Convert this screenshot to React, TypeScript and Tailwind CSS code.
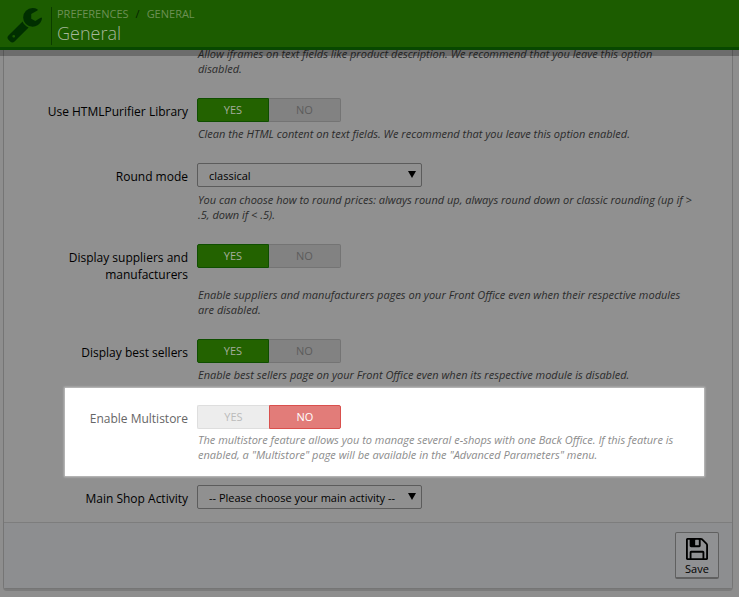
import { ReactNode } from "react";

function WrenchIcon() {
  return (
    <svg viewBox="64 128 1664 1664" className="size-[35px] fill-[#002f00]" aria-hidden="true">
      <path d="M448 1472q0-26-19-45t-45-19-45 19-19 45 19 45 45 19 45-19 19-45zm644-420l-682 682q-37 37-90 37-52 0-91-37l-106-108q-38-36-38-90 0-53 38-91l681-681q39 98 114.5 173.5t173.5 114.5zm634-435q0 39-23 106-47 134-164.5 217.5t-258.5 83.5q-185 0-316.5-131.5t-131.5-316.5 131.5-316.5 316.5-131.5q58 0 121.5 16.5t107.5 46.5q16 11 16 28t-16 28l-293 169v224l193 107q5-3 79-48.5t135.5-81 70.5-35.5q15 0 23.5 10t8.5 25z" />
    </svg>
  );
}

function SaveIcon() {
  return (
    <svg viewBox="128 128 1536 1536" className="size-[22px]" aria-hidden="true">
      <path d="M512 1536h768v-384h-768v384zm896 0h128v-896q0-14-10-38.5t-20-34.5l-281-281q-10-10-34-20t-39-10v416q0 40-28 68t-68 28h-576q-40 0-68-28t-28-68v-416h-128v1280h128v-416q0-40 28-68t68-28h832q40 0 68 28t28 68v416zm-384-928v-320q0-13-9.5-22.5t-22.5-9.5h-192q-13 0-22.5 9.5t-9.5 22.5v320q0 13 9.5 22.5t22.5 9.5h192q13 0 22.5-9.5t9.5-22.5zm640 32v928q0 40-28 68t-68 28h-1344q-40 0-68-28t-28-68v-1344q0-40 28-68t68-28h928q40 0 88 20t76 48l280 280q28 28 48 76t20 88z" />
    </svg>
  );
}

interface SwitchProps {
  name: string;
  label: string;
  value: "yes" | "no";
  light?: boolean;
}

function Switch({ name, label, value, light }: SwitchProps) {
  const off = light
    ? "border-[#dedede] bg-[#ededed] text-[#bbbbbb]"
    : "border-[#747474] bg-[#828282] text-[#5c5c5c]";
  const yes = value === "yes" ? "border-[#0f4e00] bg-[#236200] text-[#a3ad9c]" : off;
  const no = value === "no" ? "border-[#d9504d] bg-[#e27c79] text-white" : off;
  const half =
    "flex h-6 w-[72px] cursor-pointer items-center justify-center border text-[11px] leading-4";

  return (
    <div role="radiogroup" aria-label={label} className="flex">
      <label className={`${half} rounded-l-[2px] ${value === "no" ? "border-r-0" : ""} ${yes}`}>
        <input type="radio" name={name} defaultChecked={value === "yes"} className="sr-only" />
        YES
      </label>
      <label className={`${half} rounded-r-[2px] ${value === "yes" ? "border-l-0" : ""} ${no}`}>
        <input type="radio" name={name} defaultChecked={value === "no"} className="sr-only" />
        NO
      </label>
    </div>
  );
}

function Select({ id, option }: { id: string; option: string }) {
  return (
    <div className="relative w-[225px] pb-px">
      <select
        id={id}
        className="block h-6 w-full appearance-none rounded-[2px] border border-[#5c5c5c] bg-transparent pt-[2px] pl-[11px] text-[11px] leading-4 text-black"
      >
        <option>{option}</option>
      </select>
      <svg
        viewBox="0 0 8 7"
        className="pointer-events-none absolute top-2 right-[6px] h-[7px] w-2"
        aria-hidden="true"
      >
        <path d="M0 0H8L4 7Z" />
      </svg>
    </div>
  );
}

interface RowProps {
  label: string;
  htmlFor?: string;
  help?: string;
  children: ReactNode;
}

function Row({ label, htmlFor, help, children }: RowProps) {
  const labelClass = "pt-[5px] text-right text-[12px] leading-[17px] text-black";
  return (
    <div className="grid grid-cols-[184px_1fr] gap-x-[9px] gap-y-1 pr-9">
      {htmlFor
        ? <label htmlFor={htmlFor} className={labelClass}>{label}</label>
        : <span className={labelClass}>{label}</span>}
      {children}
      {help ? <Help>{help}</Help> : null}
    </div>
  );
}

function Help({ children }: { children: ReactNode }) {
  return (
    <p className="col-start-2 pl-px text-[11px] leading-[15px] text-[#2b2b2b] italic">
      {children}
    </p>
  );
}

export default function App() {
  return (
    <div className="min-h-screen bg-[#8e8e8e] pb-2 font-['Open_Sans','Noto_Sans',sans-serif]">
      <header className="sticky top-0 z-10 flex h-[50px] items-center border-b-[3px] border-[#084800] bg-[#1c5c00] pt-1 pl-[7px] shadow-[0_6px_0_rgba(0,0,0,0.25)]">
        <WrenchIcon />
        <div className="ml-[9px] h-[38px] border-l border-[#0b3d00] pl-[5px]">
          <nav className="flex text-[11px] leading-[14px] text-[#6d9055]" aria-label="Breadcrumb">
            <a href="#preferences">PREFERENCES</a>
            <span className="px-[7px] text-[#052200]">/</span>
            <a href="#general">GENERAL</a>
          </nav>
          <h1 className="text-[18px] leading-6 font-light text-[#a6b89b]">General</h1>
        </div>
      </header>

      <form className="-mt-1 mr-[6px] ml-[3px] rounded-b-[4px] border-x border-b border-[#757575] bg-[#909090] shadow-[0_2px_0_#7b7b7b]">
        <div className="flex flex-col gap-[22px] pb-3">
          <div className="grid grid-cols-[184px_1fr] gap-x-[9px] pr-9">
            <Help>
              Allow iframes on text fields like product description. We recommend that you leave
              this option disabled.
            </Help>
          </div>

          <Row
            label="Use HTMLPurifier Library"
            help="Clean the HTML content on text fields. We recommend that you leave this option enabled."
          >
            <Switch name="purifier" label="Use HTMLPurifier Library" value="yes" />
          </Row>

          <Row
            label="Round mode"
            htmlFor="round-mode"
            help="You can choose how to round prices: always round up, always round down or classic rounding (up if > .5, down if < .5)."
          >
            <Select id="round-mode" option="classical" />
          </Row>

          <Row
            label="Display suppliers and manufacturers"
            help="Enable suppliers and manufacturers pages on your Front Office even when their respective modules are disabled."
          >
            <Switch name="suppliers" label="Display suppliers and manufacturers" value="yes" />
          </Row>

          <Row
            label="Display best sellers"
            help="Enable best sellers page on your Front Office even when its respective module is disabled."
          >
            <Switch name="best-sellers" label="Display best sellers" value="yes" />
          </Row>

          <div className="-mt-4 mr-7 -mb-[13px] ml-[61px] grid grid-cols-[123px_1fr] gap-x-[9px] gap-y-[3px] bg-white pt-[17px] pr-2 pb-[14px] shadow-[0_0_2px_1px_#c4c4c4]">
            <span className="pt-[5px] text-right text-[12px] leading-[17px] text-[#666666]">
              Enable Multistore
            </span>
            <Switch name="multistore" label="Enable Multistore" value="no" light />
            <p className="col-start-2 pl-px text-[11px] leading-[15px] text-[#8c8c8c] italic">
              The multistore feature allows you to manage several e-shops with one Back Office. If
              this feature is enabled, a "Multistore" page will be available in the "Advanced
              Parameters" menu.
            </p>
          </div>

          <Row label="Main Shop Activity" htmlFor="activity">
            <Select id="activity" option="-- Please choose your main activity --" />
          </Row>
        </div>

        <footer className="flex justify-end border-t border-[#7d7d7d] bg-[#8d8e90] py-[9px] pr-[13px]">
          <button
            type="submit"
            className="flex h-[47px] w-11 flex-col items-center rounded-[2px] border border-b-2 border-[#606060] bg-[#909193] pt-[5px] text-[11px] leading-[17px] text-black"
          >
            <SaveIcon />
            Save
          </button>
        </footer>
      </form>
    </div>
  );
}
